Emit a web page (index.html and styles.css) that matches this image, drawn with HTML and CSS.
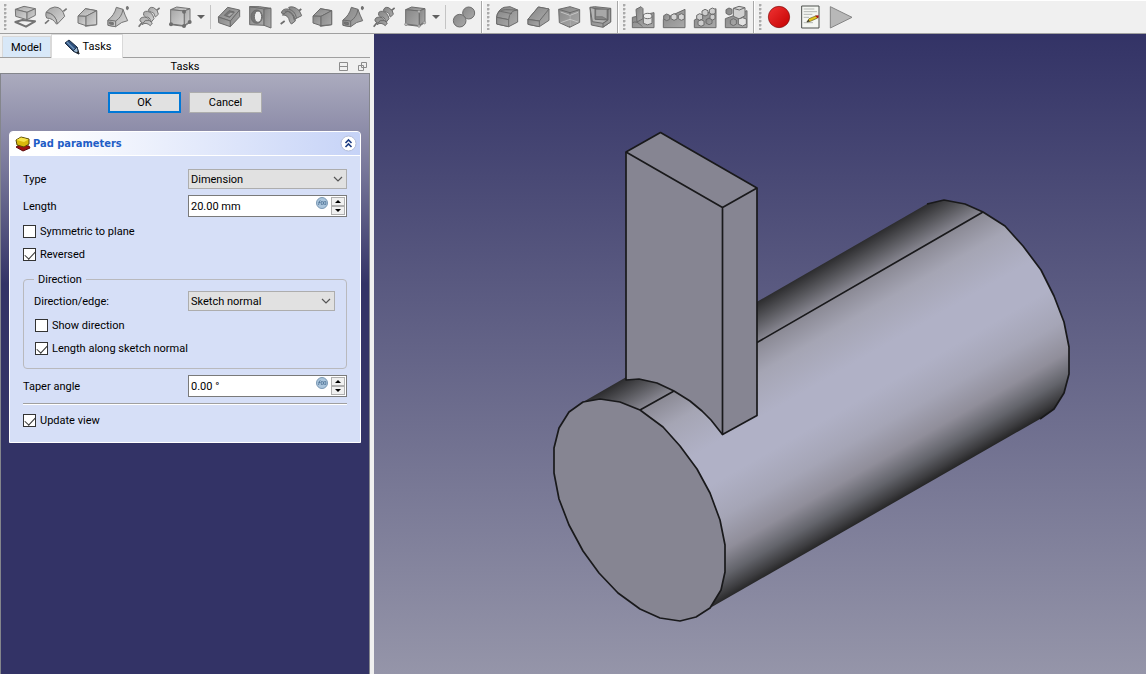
FILE: index.html
```html
<!DOCTYPE html>
<html lang="en">
<head>
<meta charset="utf-8">
<title>Pad parameters</title>
<link rel="stylesheet" href="styles.css">
</head>
<body>
<svg class="defs" aria-hidden="true">
  <defs>
    <linearGradient id="lt" x1="0" y1="0" x2="1" y2="1"><stop offset="0" stop-color="#a6a6a6"/><stop offset="1" stop-color="#d6d6d6"/></linearGradient>
    <linearGradient id="dk" x1="0" y1="0" x2="1" y2="1"><stop offset="0" stop-color="#868686"/><stop offset="1" stop-color="#aaaaaa"/></linearGradient>
    <linearGradient id="rd" x1="0" y1="0" x2="1" y2="1"><stop offset="0" stop-color="#f03434"/><stop offset="1" stop-color="#c40000"/></linearGradient>
    <symbol id="taper" viewBox="0 0 66 66"><path d="M28 8 62 14V56L28 61Z"/><path d="M28 8 6 30 30 31 62 14Z"/><path d="M6 30 30 31V59L6 51Z"/><path d="M30 31 62 14V56L30 59Z"/></symbol>
    <symbol id="sweep" viewBox="0 0 66 66"><path d="M3 42Q22 28 28 4L48 10Q54 28 62 44 44 46 26 62L3 58Z"/><path d="M3 42 26 45V62L3 58Z"/><path d="M26 45Q44 34 48 10" fill="none"/><path d="M8 48 19 50V56L8 54Z" fill="#777"/><ellipse cx="61" cy="6" rx="3" ry="5" fill="#777"/></symbol>
    <symbol id="helix" viewBox="0 0 66 66"><path d="M2 62 14 47M52 16 65 6" stroke-width="5"/><path d="M6 45Q4 34 19 33 29 33 34 42L30 51Q20 42 14 51Z"/><path d="M17 28Q14 14 29 16 44 20 48 38L40 48Q34 30 24 34Z"/><path d="M31 14Q34 1 47 5 61 12 61 25L52 33Q48 17 41 19Z"/><path d="M12 56Q24 47 37 59L43 51Q34 39 22 43Z"/></symbol>
    <symbol id="prim" viewBox="0 0 66 66"><path d="M5 11 23 3 63 8 46 15Z"/><path d="M5 11 46 15V61L5 56Z"/><path d="M46 15 63 8V49L46 61Z"/><path d="M6 54 45 59 62 47" fill="none" stroke="#707070"/></symbol>
    <symbol id="fx" viewBox="0 0 12 12"><circle cx="6" cy="6" r="5.5" fill="#abc5dc" stroke="#7a98b4"/><path d="M2.500 8 3.500 4 4.500 3.500M2.500 5.500H4.500M5.500 4Q4.800 6 5.500 8M6.500 4 8.500 8M8.500 4 6.500 8M9.500 4Q10.200 6 9.500 8" stroke="#44688c" stroke-width=".7" fill="none"/></symbol>
    <symbol id="chev" viewBox="0 0 10 6"><path d="M1 1 5 5 9 1" fill="none" stroke="#555" stroke-width="1.2"/></symbol>
  </defs>
</svg>
<div class="app">
  <header class="toolbars">
    <div class="toolbar" role="toolbar" aria-label="Modeling">
      <span class="grip"></span>
      <button class="tool" aria-label="Pad"><svg class="ic lt" viewBox="0 0 66 66"><path d="M4 48 25 42 63 46 36 62Z" fill="none" stroke-width="6"/><path d="M4 10 30 1 64 8 39 19Z"/><path d="M4 10 39 19V41L5 31Z"/><path d="M39 19 64 8V28L39 41Z"/></svg></button>
      <button class="tool" aria-label="Revolution"><svg class="ic lt" viewBox="0 0 66 66"><path d="M0 53 12 42M55 16 65 8" stroke-width="5"/><path d="M3 19Q14 4 29 3 52 3 59 31L37 54Q32 22 3 19Z"/><path d="M3 19Q1 30 5 36 25 37 34 54L37 54Q32 22 3 19Z"/></svg></button>
      <button class="tool" aria-label="Additive loft"><svg class="ic lt"><use href="#taper"/></svg></button>
      <button class="tool" aria-label="Additive pipe"><svg class="ic lt"><use href="#sweep"/></svg></button>
      <button class="tool" aria-label="Additive helix"><svg class="ic lt"><use href="#helix"/></svg></button>
      <button class="tool" aria-label="Additive primitive"><svg class="ic lt" viewBox="0 0 66 66"><use href="#prim"/><g fill="#6e6e6e" stroke="none"><circle cx="6" cy="55" r="6"/><circle cx="45" cy="60" r="6"/><circle cx="62" cy="48" r="6"/><circle cx="45" cy="17" r="6"/></g></svg></button>
      <button class="drop" aria-label="More additive primitives"></button>
      <span class="sep"></span>
      <button class="tool" aria-label="Pocket"><svg class="ic dk" viewBox="0 0 66 66"><path d="M1 33 29 4 65 12 37 45Z" /><path d="M1 33 37 45V62L2 50Z"/><path d="M37 45 65 12V32L37 62Z"/><path d="M19 28 33 14 49 18 35 34Z" fill="#777"/><path d="M28 28 38 20 45 22 35 31Z" fill="#aaa" stroke="none"/></svg></button>
      <button class="tool" aria-label="Hole"><svg class="ic dk" viewBox="0 0 66 66"><path d="M2 2 45 5V58L2 56Z"/><path d="M2 2H31L66 7 45 9Z"/><path d="M45 9 66 7V66L45 58Z"/><ellipse cx="23" cy="32" rx="17" ry="20" fill="#757575"/><ellipse cx="27" cy="32" rx="11" ry="17" fill="#ededed"/></svg></button>
      <button class="tool" aria-label="Groove"><svg class="ic dk" viewBox="0 0 66 66"><path d="M2 54 14 45M52 18 64 9" stroke-width="5"/><path d="M26 4Q41-2 58 14L65 29 47 38Z"/><path d="M4 21Q7 7 24 9 46 14 49 35L37 52Q31 26 4 21Z"/><path d="M7 27Q25 25 29 47L34 54 46 45Q43 20 23 15Z"/><path d="M14 15Q39 15 43 43" fill="none"/></svg></button>
      <button class="tool" aria-label="Subtractive loft"><svg class="ic dk"><use href="#taper"/></svg></button>
      <button class="tool" aria-label="Subtractive pipe"><svg class="ic dk"><use href="#sweep"/></svg></button>
      <button class="tool" aria-label="Subtractive helix"><svg class="ic dk"><use href="#helix"/></svg></button>
      <button class="tool" aria-label="Subtractive primitive"><svg class="ic dk" viewBox="0 0 66 66"><use href="#prim"/><g fill="#bdbdbd" stroke="#858585" stroke-width="2"><circle cx="6" cy="55" r="4"/><circle cx="45" cy="60" r="4"/><circle cx="61" cy="50" r="4"/><circle cx="45" cy="17" r="4"/></g></svg></button>
      <button class="drop" aria-label="More subtractive primitives"></button>
      <span class="sep"></span>
      <button class="tool" aria-label="Boolean operation"><svg class="ic dk" viewBox="0 0 66 66"><circle cx="47" cy="21" r="18"/><circle cx="20" cy="44" r="19"/></svg></button>
    </div>
    <div class="toolbar" role="toolbar" aria-label="Dress-up">
      <span class="grip"></span>
      <button class="tool" aria-label="Fillet"><svg class="ic dk" viewBox="0 0 66 66"><path d="M2 34Q4 12 24 4L42 2 65 12V48L38 62 2 54Z"/><path d="M2 34Q3 12 28 11L65 12Q40 13 38 41Z"/><path d="M2 34 38 41V62L2 54ZM13 16 48 23"/></svg></button>
      <button class="tool" aria-label="Chamfer"><svg class="ic dk" viewBox="0 0 66 66"><path d="M3 40 34 3 66 9V43L37 62 3 55Z"/><path d="M34 3 66 9 37 45 3 40Z"/><path d="M3 40 37 45V62L3 55Z"/></svg></button>
      <button class="tool" aria-label="Draft"><svg class="ic dk" viewBox="0 0 66 66"><path d="M2 10 36 2 65 11V49L35 64 4 50Z"/><path d="M2 10 36 20 65 11M36 20 35 64" fill="none"/><path d="M8 18 36 28 60 19M8 50 36 40 60 48M36 28V60" fill="none" stroke="#c4c4c4"/></svg></button>
      <button class="tool" aria-label="Thickness"><svg class="ic dk" viewBox="0 0 66 66"><path d="M3 4 17 2 65 7V48L42 64 7 57Z"/><path d="M18 8 57 11V42L18 40Z" fill="#858585"/><path d="M20 10H54V40L40 32H20Z" fill="#a8a8a8" stroke-width="2"/><path d="M3 4 18 8V40L57 42 42 52 10 47Z" fill="#b4b4b4"/><path d="M57 11 65 7V48L42 63V52L57 42Z"/></svg></button>
    </div>
    <div class="toolbar" role="toolbar" aria-label="Transformation">
      <span class="grip"></span>
      <button class="tool" aria-label="Mirrored"><svg class="ic dk" viewBox="0 0 66 66"><path d="M1 34 66 20V65H1Z"/><path d="M12 10 27 2 33 8V38L15 48Z"/><path d="M34 31V52Q46 61 60 52V31Z" fill="#dedede"/><ellipse cx="47" cy="30" rx="13" ry="8" fill="#ececec"/><path d="M2 50Q14 42 31 62" fill="none"/></svg></button>
      <button class="tool" aria-label="Linear pattern"><svg class="ic dk" viewBox="0 0 66 66"><path d="M1 40 66 10V65H1Z"/><path d="M2 29 11 24 20 28V40L11 44 2 39Z"/><path d="M24 28 33 23 42 27V39L33 43 24 38ZM46 28 55 23 64 27V39L55 43 46 38Z" fill="#d4d4d4"/></svg></button>
      <button class="tool" aria-label="Polar pattern"><svg class="ic dk" viewBox="0 0 66 66"><path d="M1 42 66 8V65H1Z"/><path d="M36 41 45 36 54 40V52L45 56 36 51Z"/><path d="M8 28 17 23 26 27V39L17 43 8 38ZM24 15 33 10 42 14V26L33 30 24 25ZM46 11 55 6 64 10V22L55 26 46 21ZM48 28 56 24 63 28V38L56 42 48 38ZM12 46 21 41 30 45V57L21 61 12 56Z" fill="#cdcdcd"/></svg></button>
      <button class="tool" aria-label="MultiTransform"><svg class="ic dk" viewBox="0 0 66 66"><path d="M1 38 66 14V65H1Z"/><path d="M3 11 12 6 21 10V23L12 27 3 22ZM16 43 25 38 34 42V54L25 59 16 54Z"/><path d="M25 7 42 1 60 5V29L43 39 25 31Z" fill="#d0d0d0"/><path d="M25 7 43 12M43 12 60 5" fill="none"/><path d="M40 39 53 35 64 39V54L53 60 40 55Z" fill="#e2e2e2"/></svg></button>
    </div>
    <div class="toolbar last" role="toolbar" aria-label="Macro">
      <span class="grip"></span>
      <button class="tool" aria-label="Macro recording"><svg class="ic" viewBox="0 0 66 66"><circle cx="33" cy="33" r="32" fill="url(#rd)" stroke="#7c0b0b" stroke-width="2"/></svg></button>
      <button class="tool" aria-label="Macros"><svg class="ic" viewBox="0 0 66 66"><path d="M8 0H60V66H8Z" fill="#f4f6f2" stroke="#4c504c" stroke-width="3"/><path d="M14 9H46M14 17H54M14 25H40M14 34H30M14 50H42" stroke="#b5b8b5" stroke-width="3"/><path d="M24 48 30 38 52 29 56 36 34 46Z" fill="#e3c51c" stroke="#5e5620" stroke-width="2"/><path d="M50 30 58 29 57 36Z" fill="#c11" stroke="#911" stroke-width="2"/><path d="M22 49 29 41 32 46Z" fill="#333"/></svg></button>
      <button class="tool" aria-label="Execute macro"><svg class="ic" viewBox="0 0 66 66"><path d="M1 2 66 34 1 66Z" fill="#b8b8b8" stroke="#858585" stroke-width="3"/></svg></button>
    </div>
  </header>
  <div class="work">
    <aside class="side">
      <div class="tabs" role="tablist">
        <button class="tab" role="tab">Model</button>
        <button class="tab active" role="tab" aria-selected="true"><svg class="pencil" viewBox="0 0 16 16"><path d="M1 4 5 1 13 8 15 15 9 12Z" fill="#2c4f7c" stroke="#1c2c42"/><path d="M3 3 11 11" stroke="#6e94bb" stroke-width="1.5"/><path d="M13 8 15 15 9 12Z" fill="#9ab6d0" stroke="#24364e"/><path d="M12 13.500 15 15 14.500 12Z" fill="#222"/></svg>Tasks</button>
      </div>
      <div class="dock">
        <span class="dock-title">Tasks</span>
        <span class="dock-tools">
          <button aria-label="Collapse"><svg viewBox="0 0 9 9"><path d="M.5.5H8.500V8.500H.5ZM.5 4.500H8.500"/></svg></button>
          <button aria-label="Float"><svg viewBox="0 0 9 9"><path d="M3.500.5H8.500V5.500H3.500ZM.5 3.500H5.500V8.500H.5Z"/></svg></button>
        </span>
      </div>
      <main class="tasks">
        <div class="actions"><button class="btn primary">OK</button><button class="btn">Cancel</button></div>
        <section class="card">
          <div class="card-head">
            <svg class="pad" viewBox="0 0 16 16"><path d="M1 11 5 9 14 10 15 12 8 15Z" fill="#a01212" stroke="#5c0a0a"/><path d="M1 4 6 1 14 3 14 8 9 11 2 9Z" fill="#d8b80c" stroke="#5a4b05"/><path d="M1.500 4 6 1.500 13.500 3.500 9 6Z" fill="#f7e44a"/></svg>
            <h1>Pad parameters</h1>
            <button class="fold" aria-label="Collapse section"><svg viewBox="0 0 17 17"><circle cx="8.500" cy="8.500" r="7.500" fill="#fff" stroke="#b4bedb"/><path d="M5.500 8 8.500 5 11.500 8M5.500 12 8.500 9 11.500 12" fill="none" stroke="#1c3c83" stroke-width="1.600"/></svg></button>
          </div>
          <form class="body">
            <div class="row"><label for="type">Type</label><span class="combo"><select id="type"><option>Dimension</option></select><svg><use href="#chev"/></svg></span></div>
            <div class="row"><label for="len">Length</label><span class="spin"><input id="len" type="text" value="20.00 mm"><svg class="fx"><use href="#fx"/></svg><span class="steps"><button type="button" class="up" aria-label="Increase length"></button><button type="button" class="down" aria-label="Decrease length"></button></span></span></div>
            <label class="check first"><input type="checkbox">Symmetric to plane</label>
            <label class="check"><input type="checkbox" checked>Reversed</label>
            <fieldset>
              <legend>Direction</legend>
              <div class="row"><label for="dir">Direction/edge:</label><span class="combo"><select id="dir"><option>Sketch normal</option></select><svg><use href="#chev"/></svg></span></div>
              <label class="check first"><input type="checkbox">Show direction</label>
              <label class="check"><input type="checkbox" checked>Length along sketch normal</label>
            </fieldset>
            <div class="row"><label for="taper-angle">Taper angle</label><span class="spin"><input id="taper-angle" type="text" value="0.00 °"><svg class="fx"><use href="#fx"/></svg><span class="steps"><button type="button" class="up" aria-label="Increase angle"></button><button type="button" class="down" aria-label="Decrease angle"></button></span></span></div>
            <hr>
            <label class="check update"><input type="checkbox" checked>Update view</label>
          </form>
        </section>
      </main>
    </aside>
    <section class="view" aria-label="3D view">
      <svg class="scene" viewBox="374 34 772 640" preserveAspectRatio="xMidYMid meet">
        <defs>
          <linearGradient id="cyl" gradientUnits="userSpaceOnUse" x1="583" y1="402" x2="704" y2="612">
            <stop offset="0" stop-color="#2c2c2e"/><stop offset=".07" stop-color="#58585d"/><stop offset=".15" stop-color="#8b8a95"/><stop offset=".26" stop-color="#a5a5b4"/><stop offset=".42" stop-color="#b0b1c6"/><stop offset=".56" stop-color="#b0b1c6"/><stop offset=".7" stop-color="#a5a5b6"/><stop offset=".82" stop-color="#908e9a"/><stop offset=".91" stop-color="#63646b"/><stop offset=".97" stop-color="#3d3d40"/><stop offset="1" stop-color="#262627"/>
          </linearGradient>
        </defs>
        <path fill="url(#cyl)" d="M583 402 927 204 944 200 965 204 983 212 1005 226 1023 246 1041 270 1054 296 1064 322 1069 347V374L1064 393 1054 409 1040 419 710 608Z"/>
        <g fill="none" stroke="#19191b" stroke-width="1.700" stroke-linejoin="round">
          <path d="M927 204 944 200 965 204 983 212 1005 226 1023 246 1041 270 1054 296 1064 322 1069 347V374L1064 393 1054 409 1040 419"/>
          <path d="M757 342.500 983 212M640 410 674 391"/>
          <path fill="#868592" d="M583 402 569 412 559 428 554 448V473L559 499 569 525 583 551 599 573 618 593 640 609 660 618 680 621 696 617 710 608 721 590 725 572V545L720 520 710 493 697 469 680 446 663 427 640 410 620 402 600 399Z"/>
          <path fill="#868592" d="M626 152 660.500 132.500 757 188V415.500L722.500 434.500 711 420 702 411 690 401 674 391 657 383 639 379 626 380Z"/>
          <path d="M626 152 722.500 207.500 757 188M722.500 207.500V434.500"/>
        </g>
      </svg>
    </section>
  </div>
</div>
</body>
</html>
```
FILE: styles.css
```css
* { box-sizing: border-box; }
body { margin: 0; background: #f0f0f0; color: #000; font: 11px/16px Roboto, "Noto Sans", sans-serif; }
button, input, select { font: inherit; color: inherit; }
button { padding: 0; border: 0; background: none; }
.defs { position: absolute; width: 0; height: 0; }
.app { display: flex; flex-direction: column; min-height: 100vh; }

.toolbars { display: flex; height: 34px; border-top: 1px solid #fff; border-bottom: 1px solid #a0a0a0; background: #f0f0f0; }
.toolbar { display: flex; align-items: center; padding-right: 2px; border-right: 1px solid #a8a8a8; }
.toolbar + .toolbar { border-left: 1px solid #fff; }
.toolbar.last { border-right: 0; }
.grip { width: 3px; height: 26px; margin: 0 2px 0 4px; background: radial-gradient(circle at 1px 1px, #aaa 1px, transparent 2px) 0 0 / 3px 4px; }
.toolbar + .toolbar .grip { margin-right: 1px; }
.tool { display: grid; place-items: center; width: 31px; height: 31px; }
.ic { width: 22px; height: 22px; stroke-width: 3; stroke-linejoin: round; overflow: visible; }
.lt { fill: url(#lt); stroke: #747474; }
.dk { fill: url(#dk); stroke: #6c6c6c; }
.drop { display: grid; place-items: center; width: 12px; height: 31px; }
.drop::before { content: ""; border: 4px solid transparent; border-top-color: #606060; border-bottom: 0; }
.sep { width: 1px; height: 24px; margin: 0 2px 0 3px; background: #c4c4c4; }

.work { flex: 1; display: flex; }
.side { display: flex; flex-direction: column; width: 370px; margin-right: 4px; }
.tabs { display: flex; align-items: flex-end; height: 24px; padding-left: 2px; border-bottom: 1px solid #a0a0a0; }
.tab { height: 21px; padding: 2px 8px 0; background: #d8e8f8; border: 1px solid #d9d9d9; border-bottom: 0; }
.tab.active { display: flex; align-items: center; gap: 3px; height: 24px; margin-bottom: -1px; padding: 0 11px 0 12px; background: #fff; }
.pencil { width: 16px; height: 16px; }
.dock { display: grid; grid-template-columns: 1fr auto 1fr; align-items: center; height: 15px; }
.dock-title { grid-column: 2; padding-top: 1px; }
.dock-tools { display: flex; justify-content: flex-end; gap: 10px; padding-right: 3px; }
.dock-tools button, .dock-tools svg { display: block; width: 9px; height: 9px; }
.dock-tools svg { fill: none; stroke: #8c8c8c; }
.tasks { flex: 1; padding: 18px 8px; border: 1px solid #84868c; border-bottom: 0; background: linear-gradient(#ababbe 0, #7b7a9c 90px, #333366 210px); }
.actions { display: flex; justify-content: center; gap: 8px; margin-bottom: 18px; }
.btn { width: 73px; height: 21px; padding-top: 1px; background: #e1e1e1; border: 1px solid #adadad; }
.btn.primary { border: 2px solid #0078d7; }

.card { border-radius: 4px 4px 0 0; background: #d6dff7; border: 1px solid #fff; }
.card-head { display: flex; align-items: center; gap: 2px; height: 24px; padding: 0 3px 0 5px; border-bottom: 1px solid #fff; border-radius: 3px 3px 0 0; background: linear-gradient(90deg, #fff 10%, #c6d3f7); }
.card-head h1 { flex: 1; margin: 0; padding-top: 1px; font: bold 11px/16px "DejaVu Sans Condensed", "Noto Sans", sans-serif; color: #215dc6; }
.pad { width: 16px; height: 16px; }
.fold, .fold svg { display: block; width: 17px; height: 17px; }
.body { display: flex; flex-direction: column; padding: 13px 13px 15px; }
.row { display: flex; align-items: center; margin-bottom: 6px; }
.row > label { width: 165px; padding-top: 1px; }
.combo, .spin { position: relative; flex: 1; display: flex; min-width: 0; }
.combo select { appearance: none; width: 100%; height: 20px; padding: 1px 20px 0 2px; border: 1px solid #adadad; border-radius: 0; background: #e1e1e1; }
.combo svg { position: absolute; right: 4px; top: 7px; width: 10px; height: 6px; pointer-events: none; }
.spin { height: 22px; padding: 1px; border: 1px solid #7a7a7a; background: #fff; }
.spin input { flex: 1; min-width: 0; padding: 2px 1px 0; border: 0; background: none; }
.fx { width: 12px; height: 12px; margin-right: 3px; }
.steps { display: grid; width: 14px; }
.steps button { display: grid; place-items: center; border: 1px solid #b0b0b0; background: #f0f0f0; }
.steps button::before { content: ""; border: 3px solid transparent; }
.steps .up::before { border-bottom-color: #000; border-top: 0; }
.steps .down::before { border-top-color: #000; border-bottom: 0; }
.check { display: flex; align-items: center; gap: 4px; height: 13px; margin-top: 10px; line-height: 17px; }
.check.first { margin-top: 2px; }
.check input { appearance: none; display: grid; place-items: center; width: 13px; height: 13px; margin: 0; border: 1px solid #333; background: #fff; }
.check input:checked::before { content: ""; width: 9px; height: 5px; margin-bottom: 2px; border: solid #333; border-width: 0 0 1px 1px; transform: rotate(-47deg); }
fieldset { min-width: 0; margin: 10px 0 6px; padding: 4px 11px 13px 10px; border: 1px solid #b9b9bd; border-radius: 4px; }
legend { padding: 1px 4px 0; line-height: 15px; }
fieldset .row { margin-bottom: 8px; }
fieldset .row > label { width: 154px; }
fieldset .check { margin-left: 1px; }
hr { width: 100%; height: 2px; margin: 0; border: 0; border-top: 1px solid #a0a0a0; border-bottom: 1px solid #fff; }
.check.update { margin-top: 9px; }

.view { flex: 1; min-width: 0; display: flex; background: linear-gradient(#333366, #9595a9); }
.scene { flex: 1; width: 100%; height: auto; min-height: 0; }
```
